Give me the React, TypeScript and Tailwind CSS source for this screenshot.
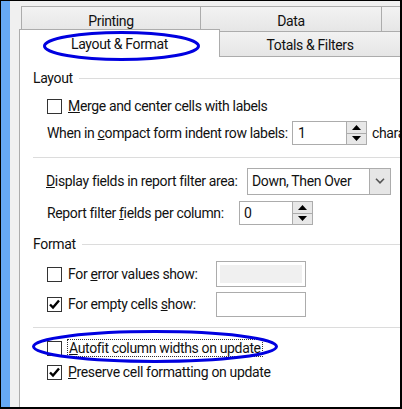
import React from 'react';

const font = { fontFamily: 'Roboto, "Noto Sans", sans-serif' };

const Checkbox = ({ checked }: { checked?: boolean }) => (
  <div className="w-[15px] h-[15px] border border-[#333333] bg-white flex items-center justify-center shrink-0">
    {checked && (
      <svg width="13" height="13" viewBox="0 0 13 13">
        <path d="M2 6.5 L5 9.5 L11 2.5" fill="none" stroke="#000" strokeWidth="2.4" />
      </svg>
    )}
  </div>
);

const Spinner = () => (
  <div className="w-[20px] h-full flex flex-col border-l border-[#acacac]">
    <div className="flex-1 bg-[#e8e8e8] border-b border-[#acacac] flex items-center justify-center">
      <svg width="9" height="5" viewBox="0 0 9 5"><path d="M0 5 L4.5 0 L9 5 Z" fill="#000" /></svg>
    </div>
    <div className="flex-1 bg-[#e8e8e8] flex items-center justify-center">
      <svg width="9" height="5" viewBox="0 0 9 5"><path d="M0 0 L4.5 5 L9 0 Z" fill="#000" /></svg>
    </div>
  </div>
);

const SectionHeader = ({ label }: { label: string }) => (
  <div className="h-[26px] flex items-center pl-[13px]">
    <span>{label}</span>
    <div className="flex-1 h-px bg-[#dcdcdc] ml-[6px]" />
  </div>
);

export default function App() {
  return (
    <div
      className="relative w-[402px] h-[409px] bg-black pt-[1px] pl-[1px] pr-[2px] pb-[2px] overflow-hidden text-[14px] tracking-[-0.35px] text-[#111]"
      style={font}
    >
      <div className="flex h-full w-full bg-[#f0f0f0]">
        <div className="w-[9px] bg-[#66a8f5]" />
        <div className="w-[9px]" />
        <div className="flex-1 flex flex-col min-w-0">
          {/* tab rows */}
          <div className="flex mt-[5px] ml-[2px] h-[25px]">
            <div className="w-[179px] border-l border-t border-[#acacac] bg-gradient-to-b from-[#f2f2f2] to-[#e6e6e6] flex justify-center pt-[4px]">
              Printing
            </div>
            <div className="w-[181px] border-l border-t border-[#acacac] bg-gradient-to-b from-[#f2f2f2] to-[#e6e6e6] flex justify-center pt-[4px]">
              Data
            </div>
            <div className="flex-1 border-l border-t border-[#acacac] bg-gradient-to-b from-[#f2f2f2] to-[#e6e6e6]" />
          </div>
          <div className="flex items-end h-[25px]">
            <div className="relative z-10 w-[201px] h-[28px] -mb-[1px] bg-white border-l border-t border-r border-[#acacac] flex justify-center pt-[4px]">
              Layout &amp; Format
            </div>
            <div className="flex-1 h-[25px] border-t border-[#acacac] bg-gradient-to-b from-[#f2f2f2] to-[#e6e6e6] flex justify-center pt-[3px]">
              Totals &amp; Filters
            </div>
          </div>

          {/* panel */}
          <div className="flex-1 bg-white border-l border-t border-[#acacac] flex flex-col overflow-hidden">
            <div className="mt-[8px]">
              <SectionHeader label="Layout" />
            </div>
            <div className="mt-[2px] h-[26px] flex items-center pl-[27px] gap-[6px]">
              <Checkbox />
              <span><u>M</u>erge and center cells with labels</span>
            </div>
            <div className="mt-[1px] h-[26px] flex items-center pl-[27px]">
              <span className="w-[245px] shrink-0 whitespace-nowrap">When in <u>c</u>ompact form indent row labels:</span>
              <div className="w-[75px] h-[24px] border border-[#acacac] flex shrink-0">
                <div className="flex-1 pl-[5px] leading-[22px]">1</div>
                <Spinner />
              </div>
              <span className="ml-[5px] whitespace-nowrap">characters</span>
            </div>
            <div className="mt-[11px] ml-[13px] h-px bg-[#dcdcdc]" />
            <div className="mt-[9px] h-[28px] flex items-center pl-[26px]">
              <span className="w-[201px] shrink-0 whitespace-nowrap"><u>D</u>isplay fields in report filter area:</span>
              <div className="w-[144px] h-[27px] border border-[#acacac] flex shrink-0">
                <div className="flex-1 pl-[4px] leading-[25px] whitespace-nowrap">Down, Then Over</div>
                <div className="w-[21px] bg-[#e6e6e6] border-l border-[#acacac] flex items-center justify-center">
                  <svg width="10" height="6" viewBox="0 0 10 6">
                    <path d="M1 0.8 L5 4.8 L9 0.8" fill="none" stroke="#555" strokeWidth="1.6" />
                  </svg>
                </div>
              </div>
            </div>
            <div className="mt-[5px] h-[26px] flex items-center pl-[27px]">
              <span className="w-[192px] shrink-0 whitespace-nowrap">Report filter <u>f</u>ields per column:</span>
              <div className="w-[74px] h-[24px] border border-[#acacac] flex shrink-0">
                <div className="flex-1 pl-[4px] leading-[22px]">0</div>
                <Spinner />
              </div>
            </div>
            <div className="mt-[5px]">
              <SectionHeader label="Format" />
            </div>
            <div className="mt-[4px] h-[26px] flex items-center pl-[27px]">
              <Checkbox />
              <span className="ml-[6px] w-[148px] shrink-0 whitespace-nowrap">For <u>e</u>rror values show:</span>
              <div className="w-[90px] h-[26px] border border-[#acacac] p-[3px] shrink-0">
                <div className="w-full h-full bg-[#f0f0f0]" />
              </div>
            </div>
            <div className="mt-[4px] h-[26px] flex items-center pl-[27px]">
              <Checkbox checked />
              <span className="ml-[6px] w-[148px] shrink-0 whitespace-nowrap">For empty cells <u>s</u>how:</span>
              <div className="w-[90px] h-[25px] border border-[#acacac] shrink-0" />
            </div>
            <div className="mt-[10px] ml-[13px] h-px bg-[#dcdcdc]" />
            <div className="mt-[9px] h-[22px] flex items-center pl-[27px]">
              <Checkbox />
              <span className="ml-[5px] px-[1px] border border-dotted border-[#333] leading-[16px] whitespace-nowrap">
                <u>A</u>utofit column widths on update
              </span>
            </div>
            <div className="mt-[2px] h-[22px] flex items-center pl-[27px]">
              <Checkbox checked />
              <span className="ml-[6px] whitespace-nowrap"><u>P</u>reserve cell formatting on update</span>
            </div>
          </div>
        </div>
      </div>

      {/* annotation ellipses */}
      <svg className="absolute inset-0 z-20 pointer-events-none" width="402" height="409">
        <ellipse cx="121.5" cy="46" rx="77" ry="13.5" fill="none" stroke="#0000e0" strokeWidth="3" />
        <ellipse cx="155" cy="346.5" rx="121.5" ry="15" fill="none" stroke="#0000e0" strokeWidth="3" />
      </svg>
    </div>
  );
}
